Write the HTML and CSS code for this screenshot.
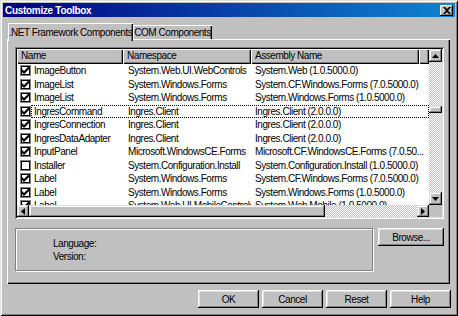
FILE: index.html
```html
<!DOCTYPE html>
<html lang="en">

<head>
    <meta charset="UTF-8">
    <title>Customize Toolbox</title>
    <link rel="stylesheet" href="styles.css">
</head>

<body>
    <div class="window">
        <div class="titlebar">
            <span class="title">Customize Toolbox</span>
            <button class="close">
                <svg width="8" height="7" viewBox="0 0 8 7"><path d="M0 0h2l2 2l2-2h2l-3 3.5l3 3.5h-2l-2-2l-2 2h-2l3-3.5z" fill="#000"/></svg>
            </button>
        </div>

        <div class="tabs">
            <div class="tab active">.NET Framework Components</div>
            <div class="tab">COM Components</div>
        </div>

        <div class="panel">
            <div class="listview">
                <div class="list-area">
                    <div class="header">
                        <div class="hcell">Name</div>
                        <div class="hcell">Namespace</div>
                        <div class="hcell">Assembly Name</div>
                        <div class="hcell filler"></div>
                    </div>
                    <div class="rows">
                        <div class="row"><div class="cell name"><span class="check on"></span>ImageButton</div><div class="cell">System.Web.UI.WebControls</div><div class="cell">System.Web (1.0.5000.0)</div></div>
                        <div class="row"><div class="cell name"><span class="check on"></span>ImageList</div><div class="cell">System.Windows.Forms</div><div class="cell">System.CF.Windows.Forms (7.0.5000.0)</div></div>
                        <div class="row"><div class="cell name"><span class="check on"></span>ImageList</div><div class="cell">System.Windows.Forms</div><div class="cell">System.Windows.Forms (1.0.5000.0)</div></div>
                        <div class="row focus"><div class="cell name"><span class="check on"></span>IngresCommand</div><div class="cell">Ingres.Client</div><div class="cell">Ingres.Client (2.0.0.0)</div></div>
                        <div class="row"><div class="cell name"><span class="check on"></span>IngresConnection</div><div class="cell">Ingres.Client</div><div class="cell">Ingres.Client (2.0.0.0)</div></div>
                        <div class="row"><div class="cell name"><span class="check on"></span>IngresDataAdapter</div><div class="cell">Ingres.Client</div><div class="cell">Ingres.Client (2.0.0.0)</div></div>
                        <div class="row"><div class="cell name"><span class="check on"></span>InputPanel</div><div class="cell">Microsoft.WindowsCE.Forms</div><div class="cell">Microsoft.CF.WindowsCE.Forms (7.0.50...</div></div>
                        <div class="row"><div class="cell name"><span class="check"></span>Installer</div><div class="cell">System.Configuration.Install</div><div class="cell">System.Configuration.Install (1.0.5000.0)</div></div>
                        <div class="row"><div class="cell name"><span class="check on"></span>Label</div><div class="cell">System.Windows.Forms</div><div class="cell">System.CF.Windows.Forms (7.0.5000.0)</div></div>
                        <div class="row"><div class="cell name"><span class="check on"></span>Label</div><div class="cell">System.Windows.Forms</div><div class="cell">System.Windows.Forms (1.0.5000.0)</div></div>
                        <div class="row"><div class="cell name"><span class="check on"></span>Label</div><div class="cell">System.Web.UI.MobileControls</div><div class="cell">System.Web.Mobile (1.0.5000.0)</div></div>
                    </div>
                </div>

                <div class="vscroll">
                    <div class="sbtn"><svg width="7" height="4" viewBox="0 0 7 4"><path d="M3.5 0L7 4H0z" fill="#000"/></svg></div>
                    <div class="track">
                        <div class="thumb" style="margin-top: 44px"></div>
                    </div>
                    <div class="sbtn"><svg width="7" height="4" viewBox="0 0 7 4"><path d="M0 0h7L3.5 4z" fill="#000"/></svg></div>
                </div>

                <div class="hscroll">
                    <div class="sbtn"><svg width="4" height="7" viewBox="0 0 4 7"><path d="M0 3.5L4 0v7z" fill="#000"/></svg></div>
                    <div class="track">
                        <div class="thumb" style="width: 296px"></div>
                    </div>
                    <div class="sbtn"><svg width="4" height="7" viewBox="0 0 4 7"><path d="M0 0l4 3.5L0 7z" fill="#000"/></svg></div>
                </div>
                <div class="corner"></div>
            </div>

            <div class="info-row">
                <div class="info">
                    <div>Language:</div>
                    <div>Version:</div>
                </div>
                <button class="button browse">Browse...</button>
            </div>
        </div>

        <div class="buttons">
            <button class="button">OK</button>
            <button class="button">Cancel</button>
            <button class="button">Reset</button>
            <button class="button">Help</button>
        </div>
    </div>
</body>

</html>
```

FILE: styles.css
```css
* {
    box-sizing: border-box;
}

html,
body {
    margin: 0;
    padding: 0;
}

body {
    width: 458px;
    height: 316px;
    overflow: hidden;
    font-family: "Liberation Sans", Arial, sans-serif;
    font-size: 10px;
    letter-spacing: -0.45px;
    color: #000;
    background: #c0c0c0;
}

.window {
    width: 458px;
    height: 316px;
    padding: 3px;
    background: #c0c0c0;
    box-shadow: inset 1px 1px #dfdfdf, inset -1px -1px #000, inset 2px 2px #fff, inset -2px -2px #808080;
    display: flex;
    flex-direction: column;
}

.titlebar {
    height: 14px;
    padding: 0 2px 0 2px;
    background: linear-gradient(to right, #000080, #1084d0);
    display: flex;
    align-items: center;
    justify-content: space-between;
}

.title {
    color: #fff;
    font-weight: bold;
    letter-spacing: -0.3px;
}

.close {
    width: 13px;
    height: 11px;
    padding: 0;
    border: 0;
    background: #c0c0c0;
    box-shadow: inset -1px -1px #000, inset 1px 1px #fff, inset -2px -2px #808080;
    display: flex;
    align-items: center;
    justify-content: center;
}

/* tabs */

.tabs {
    display: flex;
    align-items: flex-end;
    height: 16px;
    margin: 6px 0 0 5px;
}

.tab {
    width: 79px;
    height: 14px;
    white-space: nowrap;
    display: flex;
    align-items: center;
    justify-content: center;
    box-shadow: inset 1px 1px #fff, inset -1px 0 #000, inset -2px 0 #808080;
}

.tab.active {
    width: 125px;
    height: 18px;
    margin-bottom: -2px;
    position: relative;
    z-index: 1;
    background: #c0c0c0;
}

.panel {
    height: 245px;
    margin: 0 5px 0 4px;
    padding: 8px 6px 0 8px;
    box-shadow: inset 1px 1px #fff, inset -1px -1px #000, inset -2px -2px #808080;
    display: flex;
    flex-direction: column;
    gap: 9px;
}

/* list view */

.listview {
    height: 172px;
    padding: 2px;
    background: #fff;
    box-shadow: inset 1px 1px #808080, inset -1px -1px #fff, inset 2px 2px #000, inset -2px -2px #dfdfdf;
    display: grid;
    grid-template-columns: 1fr 13px;
    grid-template-rows: 1fr 12px;
}

.list-area {
    overflow: hidden;
    white-space: nowrap;
}

.header {
    display: grid;
    grid-template-columns: 106px 128px 168px 1fr;
    height: 15px;
}

.hcell {
    padding-left: 4px;
    line-height: 14px;
    background: #c0c0c0;
    box-shadow: inset 1px 1px #fff, inset -1px -1px #000, inset -2px -2px #808080;
}

.row {
    display: grid;
    grid-template-columns: 106px 128px 168px;
    height: 13.5px;
    align-items: center;
    position: relative;
}

.cell {
    padding-left: 5px;
    overflow: hidden;
}

.cell:last-child {
    padding-left: 4px;
    overflow: visible;
}

.cell.name {
    padding-left: 3px;
    display: flex;
    align-items: center;
    gap: 3px;
}

.row.focus::after {
    content: "";
    position: absolute;
    left: 14px;
    right: 0;
    top: 0;
    bottom: 0;
    border: 1px dotted #000;
}

.check {
    width: 11px;
    height: 11px;
    flex: none;
    background: #fff;
    box-shadow: inset 0 0 0 1px #808080, inset 0 0 0 2px #000;
}

.check.on {
    background: #fff url("data:image/svg+xml,%3Csvg xmlns='http://www.w3.org/2000/svg' width='7' height='7'%3E%3Cpath d='M0 2l2 2l5-5v3l-5 5l-2-2z' fill='%23000'/%3E%3C/svg%3E") center / 7px 7px no-repeat;
}

/* scroll bars */

.vscroll,
.hscroll {
    display: flex;
    background: #c0c0c0 repeating-conic-gradient(#c0c0c0 0 25%, #fff 0 50%) 0 0 / 2px 2px;
}

.vscroll {
    flex-direction: column;
}

.sbtn {
    flex: none;
    width: 13px;
    height: 13px;
    background: #c0c0c0;
    box-shadow: inset -1px -1px #000, inset 1px 1px #dfdfdf, inset -2px -2px #808080, inset 2px 2px #fff;
    display: flex;
    align-items: center;
    justify-content: center;
}

.hscroll .sbtn {
    width: 12px;
    height: 12px;
}

.track {
    flex: 1;
    display: flex;
}

.vscroll .track {
    flex-direction: column;
}

.thumb {
    flex: none;
    height: 7px;
    background: #c0c0c0;
    box-shadow: inset -1px -1px #000, inset 1px 1px #dfdfdf, inset -2px -2px #808080, inset 2px 2px #fff;
}

.hscroll .thumb {
    height: 12px;
}

.corner {
    background: #c0c0c0;
}

/* info box */

.info-row {
    display: flex;
    gap: 5px;
    align-items: flex-start;
}

.info {
    flex: 1;
    height: 43px;
    padding: 8px 0 0 37px;
    line-height: 13px;
    border: 1px solid #808080;
    box-shadow: inset 1px 1px #fff, 1px 1px #fff;
}

.button {
    height: 18px;
    padding: 0;
    border: 0;
    font: inherit;
    letter-spacing: inherit;
    color: #000;
    background: #c0c0c0;
    box-shadow: inset -1px -1px #000, inset 1px 1px #fff, inset -2px -2px #808080, inset 2px 2px #dfdfdf;
}

.browse {
    width: 66px;
}

.buttons {
    display: flex;
    justify-content: flex-end;
    gap: 3px;
    margin: 6px 4px 0 0;
}

.buttons .button {
    width: 61px;
}
```
